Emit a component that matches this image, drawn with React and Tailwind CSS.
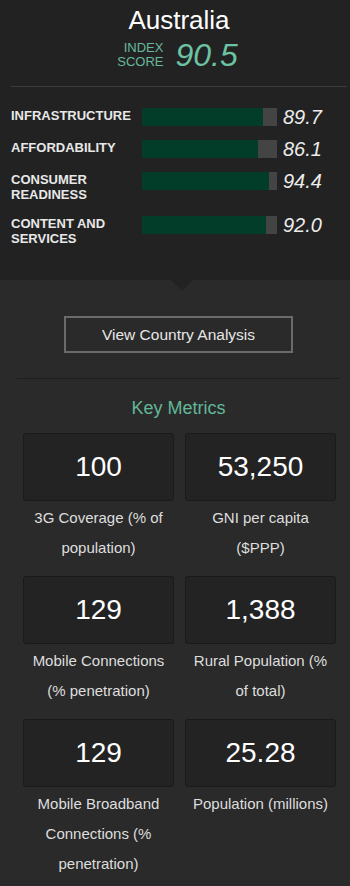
import React from "react";

const bars = [
  { label: "INFRASTRUCTURE", value: 89.7, text: "89.7" },
  { label: "AFFORDABILITY", value: 86.1, text: "86.1" },
  { label: "CONSUMER READINESS", value: 94.4, text: "94.4" },
  { label: "CONTENT AND SERVICES", value: 92.0, text: "92.0" },
];

const metrics = [
  { value: "100", label: "3G Coverage (% of population)" },
  { value: "53,250", label: "GNI per capita ($PPP)" },
  { value: "129", label: "Mobile Connections (% penetration)" },
  { value: "1,388", label: "Rural Population (% of total)" },
  { value: "129", label: "Mobile Broadband Connections (% penetration)" },
  { value: "25.28", label: "Population (millions)" },
];

export default function App() {
  return (
    <div
      className="w-[350px] min-h-[886px] bg-[#2a2a2a] text-white"
      style={{ fontFamily: '"Liberation Sans", Arial, sans-serif' }}
    >
      {/* Top section */}
      <div className="relative bg-[#222222] pl-[11px] pr-[3px] pt-[5px] pb-[34px]">
        <div className="text-center text-[26px] leading-[30px] text-white">Australia</div>
        <div className="mt-[4px] flex justify-center items-start gap-[12px] pr-[3px]">
          <div className="mt-[2px] text-right text-[13px] leading-[14px] text-[#66b99b]">
            <div>INDEX</div>
            <div>SCORE</div>
          </div>
          <div className="italic text-[32px] leading-[32px] text-[#6cc2a2]">90.5</div>
        </div>
        <div className="mt-[15px] h-px bg-[#3a3a3a]" />
        <div className="mt-[21px] flex flex-col gap-[14px]">
          {bars.map((b) => (
            <div key={b.label} className="flex items-start">
              <div className="w-[131px] shrink-0 text-[13px] leading-[15px] font-bold text-[#e8e8e8]">
                {b.label}
              </div>
              <div className="w-[135px] h-[18px] shrink-0 bg-[#444444]">
                <div className="h-full bg-[#013d29]" style={{ width: `${b.value}%` }} />
              </div>
              <div className="ml-[6px] italic text-[20px] leading-[18px] text-[#ececec]">{b.text}</div>
            </div>
          ))}
        </div>
        <div className="absolute left-[171px] top-full w-0 h-0 border-l-[11px] border-r-[11px] border-t-[11px] border-l-transparent border-r-transparent border-t-[#222222]" />
      </div>

      {/* Bottom section */}
      <div className="pl-[17px] pr-[10px] pt-[36px] pb-[7px]">
        <div className="flex justify-center">
          <button className="w-[229px] h-[37px] border-2 border-[#6b6b6b] text-[15.5px] text-[#e6e6e6] bg-transparent">
            View Country Analysis
          </button>
        </div>
        <div className="mt-[25px] h-px bg-[#1e1e1e]" />
        <div className="mt-[17px] text-center text-[18px] leading-[24px] text-[#62b797]">Key Metrics</div>
        <div className="mt-[13px] pl-[6px] pr-[4px] grid grid-cols-2 gap-x-[11px] gap-y-[13px]">
          {metrics.map((m, i) => (
            <div key={i} className="flex flex-col items-center">
              <div className="w-full h-[68px] rounded-[3px] border border-[#1a1a1a] bg-[#232323] flex items-center justify-center text-[28px] text-white">
                {m.value}
              </div>
              <div className="mt-[2px] w-[145px] text-center text-[15px] leading-[30px] text-[#dedede]">
                {m.label}
              </div>
            </div>
          ))}
        </div>
      </div>
    </div>
  );
}
